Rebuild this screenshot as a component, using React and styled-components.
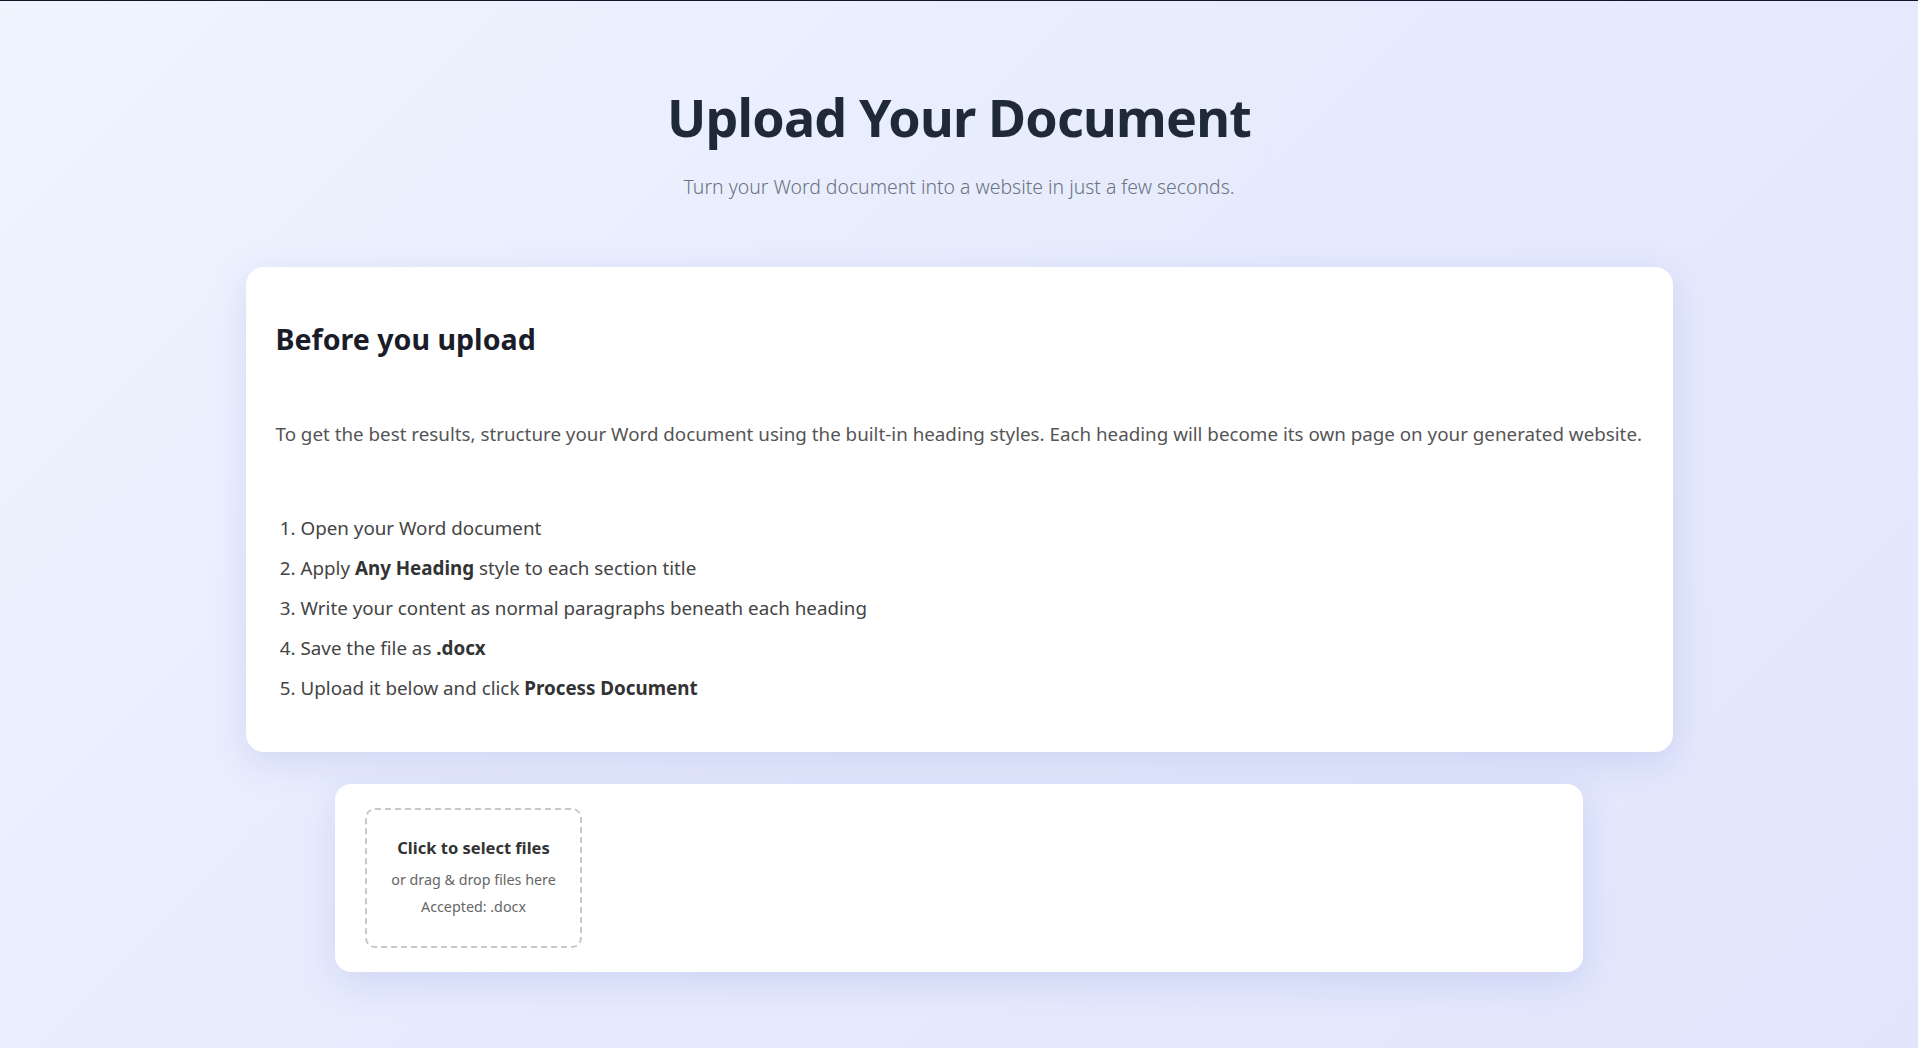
import { createGlobalStyle, styled } from "styled-components";

const GlobalStyle = createGlobalStyle`
  html, body {
    margin: 0;
    padding: 0;
  }
  body {
    min-height: 100vh;
    font-family: "Noto Sans", "Open Sans", sans-serif;
    background: linear-gradient(135deg, #f0f4ff 0%, #e6ebfd 50%, #e1e6fc 100%);
    border-top: 1px solid #0f172a;
    box-sizing: border-box;
  }
  * {
    box-sizing: border-box;
  }
`;

const Page = styled.main`
  display: flex;
  flex-direction: column;
  align-items: center;
  padding: 85px 20px 60px;
`;

const Title = styled.h1`
  margin: 0;
  font-size: 52px;
  line-height: 1.2;
  font-weight: 700;
  color: #1f2937;
  letter-spacing: -0.8px;
`;

const Subtitle = styled.p`
  margin: 25px 0 0;
  font-size: 19.4px;
  font-weight: 300;
  color: #6b7280;
`;

const Card = styled.section`
  width: ${(p) => p.$width}px;
  background: #fff;
  border-radius: ${(p) => p.$radius || 18}px;
  box-shadow: 0 10px 36px rgba(90, 100, 190, 0.16);
  padding: ${(p) => p.$padding};
  margin-top: ${(p) => p.$top}px;
`;

const CardTitle = styled.h2`
  margin: 0;
  font-size: 28.6px;
  line-height: 1.3;
  font-weight: 700;
  color: #1a1d29;
`;

const Lead = styled.p`
  margin: 62px 0 0;
  font-size: 18.8px;
  line-height: 1.5;
  color: #555;
`;

const Steps = styled.ol`
  margin: 66px 0 0;
  padding-left: 25px;
  font-size: 18.8px;
  line-height: 28px;
  color: #444;

  li {
    margin-bottom: 12px;
  }
  li:last-child {
    margin-bottom: 0;
  }
  strong {
    color: #333;
    font-weight: 700;
  }
`;

const DropZone = styled.label`
  width: 217px;
  height: 140px;
  border: 2px dashed #c8c8c8;
  border-radius: 10px;
  display: flex;
  flex-direction: column;
  align-items: center;
  justify-content: center;
  text-align: center;
  cursor: pointer;
`;

const DropTitle = styled.span`
  font-size: 16.5px;
  font-weight: 700;
  color: #333;
  margin-bottom: 7px;
`;

const DropHint = styled.span`
  font-size: 14.3px;
  line-height: 27px;
  color: #666;
`;

export default function App() {
  return (
    <>
      <GlobalStyle />
      <Page>
        <Title>Upload Your Document</Title>
        <Subtitle>Turn your Word document into a website in just a few seconds.</Subtitle>

        <Card $width={1427} $top={67} $padding="53px 30px 50px 30px">
          <CardTitle>Before you upload</CardTitle>
          <Lead>
            To get the best results, structure your Word document using the built-in heading styles. Each heading will
            become its own page on your generated website.
          </Lead>
          <Steps>
            <li>Open your Word document</li>
            <li>
              Apply <strong>Any Heading</strong> style to each section title
            </li>
            <li>Write your content as normal paragraphs beneath each heading</li>
            <li>
              Save the file as <strong>.docx</strong>
            </li>
            <li>
              Upload it below and click <strong>Process Document</strong>
            </li>
          </Steps>
        </Card>

        <Card $width={1248} $top={32} $radius={16} $padding="24px 30px">
          <DropZone>
            <DropTitle>Click to select files</DropTitle>
            <DropHint>or drag &amp; drop files here</DropHint>
            <DropHint>Accepted: .docx</DropHint>
          </DropZone>
        </Card>
      </Page>
    </>
  );
}
